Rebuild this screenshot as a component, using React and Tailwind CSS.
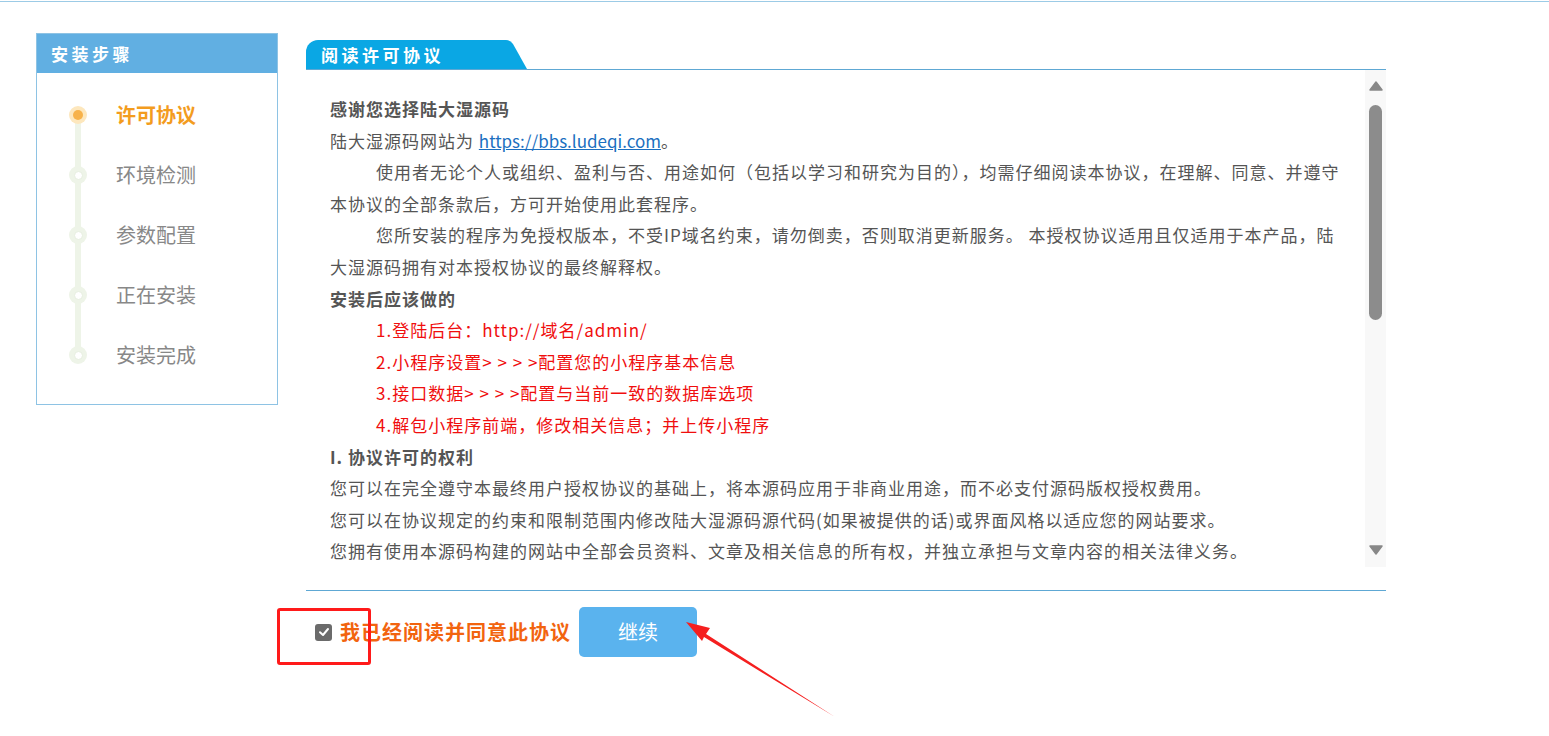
import React from 'react';

const font = { fontFamily: '"Noto Sans CJK SC", "Noto Sans", sans-serif' };

const steps = ['许可协议', '环境检测', '参数配置', '正在安装', '安装完成'];

function Sidebar() {
  return (
    <div className="w-[242px] h-[372px] border border-[#8ec3e4] shrink-0">
      <div className="h-[39px] bg-[#61afe2] flex items-center pl-[14px] text-white font-bold text-[17px] tracking-[3.5px]">
        安装步骤
      </div>
      <div className="relative pt-[12px] pl-[32px]">
        <div className="absolute left-[38px] top-[34px] w-[6px] h-[240px] bg-[#eef4e8]"></div>
        {steps.map((s, i) => (
          <div key={s} className="relative h-[60px] flex items-center">
            {i === 0 ? (
              <div className="w-[18px] h-[18px] rounded-full bg-[#fde7bd] flex items-center justify-center">
                <div className="w-[10px] h-[10px] rounded-full bg-[#f7b24a]"></div>
              </div>
            ) : (
              <div className="w-[18px] h-[18px] rounded-full bg-[#eef4e8] flex items-center justify-center">
                <div className="w-[9px] h-[9px] rounded-full bg-white border border-[#e6eedf]"></div>
              </div>
            )}
            <span className={'ml-[29px] text-[20px] ' + (i === 0 ? 'text-[#f39c1e] font-bold' : 'text-[#888]')}>{s}</span>
          </div>
        ))}
      </div>
    </div>
  );
}

function Scrollbar() {
  return (
    <div className="w-[21px] h-[497px] bg-[#f8f8f8] flex flex-col items-center pt-[11px] shrink-0">
      <svg width="14" height="10" viewBox="0 0 14 10"><path d="M7 1 L13 9 L1 9 Z" fill="#888" stroke="#888" strokeLinejoin="round" strokeWidth="1.5" /></svg>
      <div className="w-[13px] h-[215px] mt-[14px] rounded-full bg-[#8c8c8c]"></div>
      <div className="flex-1"></div>
      <svg width="14" height="10" viewBox="0 0 14 10" className="mb-[12px]"><path d="M1 1 L13 1 L7 9 Z" fill="#888" stroke="#888" strokeLinejoin="round" strokeWidth="1.5" /></svg>
    </div>
  );
}

function Agreement() {
  return (
    <div className="w-[1080px] mt-[7px]">
      <div className="flex items-end border-b border-[#5ea8d4]">
        <div className="h-[29px] w-[200px] bg-[#0aa7e4] rounded-tl-[12px] flex items-center pl-[15px] text-white font-bold text-[17px] tracking-[3.5px]">
          阅读许可协议
        </div>
        <svg width="22" height="29" viewBox="0 0 22 29" className="block -ml-px">
          <path d="M0 0 L1 0 Q5 0 8 4 L22 29 L0 29 Z" fill="#0aa7e4" />
        </svg>
      </div>
      <div className="flex border-b border-[#5ea8d4] pb-[23px]">
        <div className="flex-1 h-[497px] overflow-hidden pl-[24px] pr-[20px] pt-[23px] text-[17px] tracking-[1px] leading-[31.6px] text-[#555]">
          <p className="font-bold">感谢您选择陆大湿源码</p>
          <p>陆大湿源码网站为 <a className="text-[#1b6fc0] underline tracking-normal">https://bbs.ludeqi.com</a>。</p>
          <p className="indent-[46px]">使用者无论个人或组织、盈利与否、用途如何（包括以学习和研究为目的），均需仔细阅读本协议，在理解、同意、并遵守本协议的全部条款后，方可开始使用此套程序。</p>
          <p className="indent-[46px]">您所安装的程序为免授权版本，不受IP域名约束，请勿倒卖，否则取消更新服务。 本授权协议适用且仅适用于本产品，陆大湿源码拥有对本授权协议的最终解释权。</p>
          <p className="font-bold">安装后应该做的</p>
          <div className="pl-[46px] text-[#f00e0e]">
            <p>1.登陆后台：http://域名/admin/</p>
            <p>2.小程序设置&gt; &gt; &gt; &gt;配置您的小程序基本信息</p>
            <p>3.接口数据&gt; &gt; &gt; &gt;配置与当前一致的数据库选项</p>
            <p>4.解包小程序前端，修改相关信息；并上传小程序</p>
          </div>
          <p className="font-bold">I. 协议许可的权利</p>
          <p>您可以在完全遵守本最终用户授权协议的基础上，将本源码应用于非商业用途，而不必支付源码版权授权费用。</p>
          <p>您可以在协议规定的约束和限制范围内修改陆大湿源码源代码(如果被提供的话)或界面风格以适应您的网站要求。</p>
          <p>您拥有使用本源码构建的网站中全部会员资料、文章及相关信息的所有权，并独立承担与文章内容的相关法律义务。</p>
        </div>
        <Scrollbar />
      </div>
      <div className="flex items-center mt-[16px] ml-[9px]">
        <div className="w-[17px] h-[17px] rounded-[3px] bg-[#6b6b6b] flex items-center justify-center">
          <svg width="12" height="12" viewBox="0 0 12 12"><path d="M2 6.2 L5 9 L10 3" fill="none" stroke="white" strokeWidth="2" strokeLinecap="round" strokeLinejoin="round" /></svg>
        </div>
        <span className="ml-[8px] text-[20px] font-bold text-[#f2640f] tracking-[1px]">我已经阅读并同意此协议</span>
        <button className="ml-[8px] w-[118px] h-[50px] rounded-[5px] bg-[#5ab3ee] text-white text-[20px]">继续</button>
      </div>
    </div>
  );
}

export default function App() {
  return (
    <div className="relative w-[1549px] h-[736px] bg-white overflow-hidden" style={font}>
      <div className="mt-[1px] h-px bg-[#9ccbe6]"></div>
      <div className="flex pl-[36px] pt-[31px] gap-[28px]">
        <Sidebar />
        <Agreement />
      </div>
      <div className="absolute left-[277px] top-[608px] w-[94px] h-[57px] border-[3px] border-[#ff1a1a] rounded-[3px]"></div>
      <svg className="absolute left-0 top-0 pointer-events-none" width="1549" height="736">
        <path d="M835 717 L706 634 L710 628 L686 622 L702 641 L704 637 Z" fill="#f51f1f" />
      </svg>
    </div>
  );
}
